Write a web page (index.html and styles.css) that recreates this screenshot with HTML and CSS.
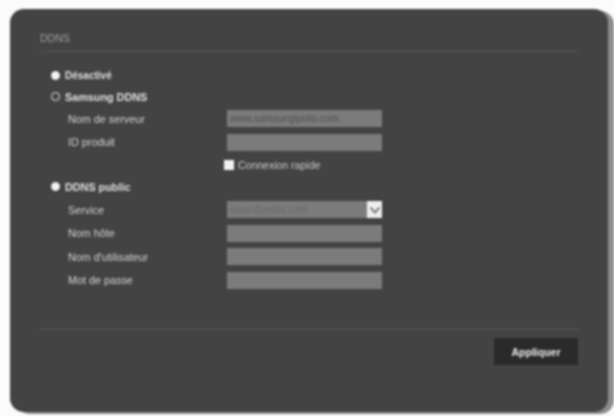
FILE: index.html
```html
<!DOCTYPE html>
<html lang="fr">
<head>
<meta charset="utf-8">
<title>DDNS</title>
<link rel="stylesheet" href="styles.css">
</head>
<body>
<main class="panel">
  <h1 class="title">DDNS</h1>
  <form class="form">
    <div class="radio-row first"><span class="radio on"></span><span class="radio-label">Désactivé</span></div>
    <div class="radio-row"><span class="radio"></span><span class="radio-label wide">Samsung DDNS</span></div>
    <div class="field"><span class="label">Nom de serveur</span><span class="input">www.samsungipolis.com</span></div>
    <div class="field"><span class="label">ID produit</span><span class="input"></span></div>
    <div class="check-row"><span class="check"></span><span class="check-label">Connexion rapide</span></div>
    <div class="radio-row public"><span class="radio on"></span><span class="radio-label wide">DDNS public</span></div>
    <div class="field"><span class="label">Service</span>
      <span class="input select"><span class="select-text">www.dyndns.com</span>
        <span class="arrow"><svg viewBox="0 0 14 14" width="14" height="14"><path d="M2.5 4.500 7 9.500l4.500-5" fill="none" stroke="#666" stroke-width="1.800"/></svg></span>
      </span></div>
    <div class="field"><span class="label">Nom hôte</span><span class="input"></span></div>
    <div class="field"><span class="label">Nom d'utilisateur</span><span class="input"></span></div>
    <div class="field"><span class="label">Mot de passe</span><span class="input"></span></div>
  </form>
  <div class="footer"><button class="apply" type="button">Appliquer</button></div>
</main>
</body>
</html>
```
FILE: styles.css
```css
html, body {
  margin: 0;
  height: 416px;
  overflow: hidden;
  background: #fbfbfb;
}
body {
  font-family: "Liberation Sans", Arial, sans-serif;
  color: #e2e2e2;
}
.panel {
  box-sizing: border-box;
  width: 598px;
  height: 403px;
  margin: 9px 0 0 10px;
  padding: 0 30px 0 30px;
  background: #444343;
  border-radius: 14px;
  box-shadow: 6px 2px 0 #8d8d8d;
  filter: blur(0.9px);
}
.title {
  margin: 0;
  height: 43px;
  box-sizing: border-box;
  padding-top: 23px;
  font-size: 10.500px;
  line-height: 12px;
  font-weight: 400;
  color: #a0a0a0;
  border-bottom: 1px solid #565656;
}
.form {
  height: 278px;
  box-sizing: border-box;
  padding: 13px 0 0 11px;
  border-bottom: 1px solid #5a5a5a;
}
.radio-row {
  display: flex;
  align-items: center;
  gap: 5px;
  height: 21px;
}
.radio-row.public {
  height: 23px;
  margin-top: 0;
}
.radio {
  box-sizing: border-box;
  width: 9px;
  height: 9px;
  border: 1.500px solid #eee;
  border-radius: 50%;
}
.radio.on {
  background: #f4f4f4;
}
.radio-label {
  font-size: 10px;
  font-weight: 700;
  color: #e0e0e0;
}
.radio-label.wide {
  font-size: 10.800px;
}
.field {
  display: flex;
  align-items: center;
  height: 23.500px;
  padding-left: 17px;
}
.label {
  width: 159px;
  font-size: 10.800px;
  color: #d4d4d4;
}
.input {
  display: flex;
  align-items: center;
  box-sizing: border-box;
  width: 155px;
  height: 17px;
  padding-left: 3px;
  background: #7b7b7b;
  font-size: 10px;
  color: #505050;
  overflow: hidden;
  white-space: nowrap;
}
.select {
  justify-content: space-between;
  padding-right: 0;
  color: #6a6a6a;
}
.arrow {
  display: flex;
  align-items: center;
  justify-content: center;
  width: 15px;
  height: 17px;
  background: #eeeeee;
}
.check-row {
  display: flex;
  align-items: center;
  gap: 4px;
  height: 21px;
  padding-left: 173px;
}
.check {
  width: 10px;
  height: 10px;
  background: #f2f2f2;
}
.check-label {
  font-size: 10.500px;
  color: #cccccc;
}
.footer {
  display: flex;
  justify-content: flex-end;
  padding-top: 8px;
}
.apply {
  width: 84px;
  height: 27px;
  border: 0;
  padding: 0;
  background: #2b2a2a;
  color: #efefef;
  font-family: inherit;
  font-size: 10.500px;
  font-weight: 700;
}
```
